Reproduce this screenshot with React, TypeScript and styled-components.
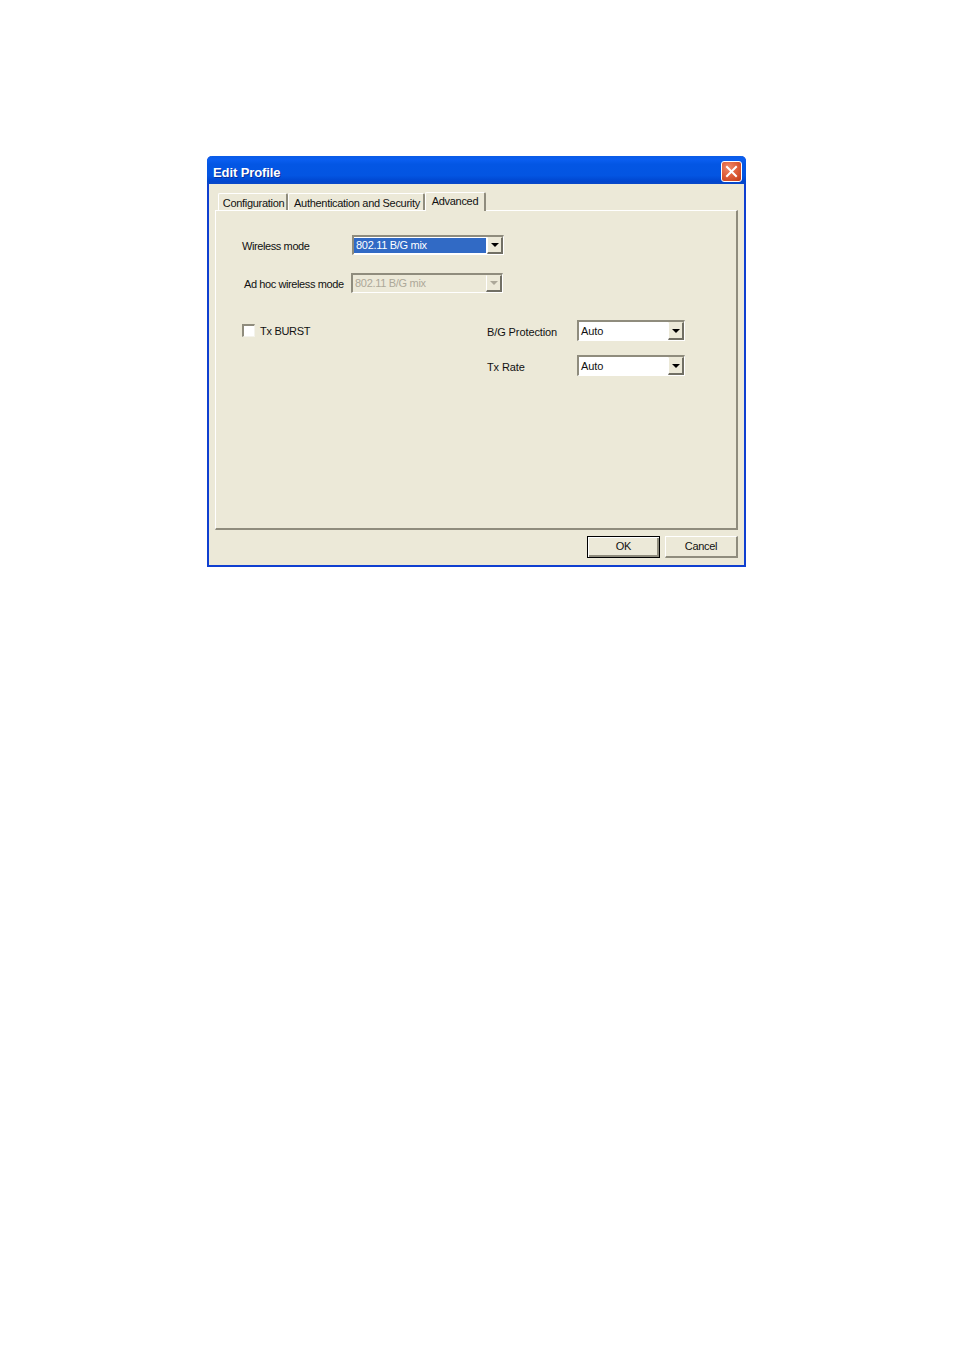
import React from "react";
import styled, { createGlobalStyle } from "styled-components";

const Global = createGlobalStyle`
  html, body { margin: 0; padding: 0; background: #fff; }
  body { font-family: "Liberation Sans", Arial, sans-serif; font-size: 11px; letter-spacing: -0.3px; color: #111; }
`;

const Dialog = styled.div`
  box-sizing: border-box;
  width: 539px;
  height: 411px;
  margin: 156px 0 0 207px;
  display: flex;
  flex-direction: column;
  background: #ece9d8;
  border: solid #0f3fd0;
  border-width: 0 2px 2px 2px;
  border-radius: 5px 5px 0 0;
`;

const TitleBar = styled.div`
  flex: none;
  height: 28px;
  margin: 0 -2px;
  padding: 0 4px 0 6px;
  display: flex;
  align-items: center;
  justify-content: space-between;
  border-radius: 5px 5px 0 0;
  background: linear-gradient(180deg, #0a5be6 0%, #0a5ef0 12%, #0356e4 30%, #0355e2 70%, #0046cf 90%, #0a48c8 100%);
`;

const Title = styled.span`
  padding-top: 4px;
  font-size: 13px;
  font-weight: bold;
  letter-spacing: -0.1px;
  color: #fff;
  text-shadow: 1px 1px 0 #0a2f9c;
`;

const CloseButton = styled.button`
  box-sizing: border-box;
  width: 21px;
  height: 21px;
  margin-top: 3px;
  padding: 0;
  display: flex;
  align-items: center;
  justify-content: center;
  border: 1px solid #fff;
  border-radius: 3px;
  background: radial-gradient(circle at 35% 30%, #ee8b6c 0%, #e0603c 45%, #c03a16 100%);
`;

const TabStrip = styled.div`
  flex: none;
  height: 26px;
  padding-left: 9px;
  display: flex;
  align-items: flex-end;
`;

const Tab = styled.div<{ $active?: boolean; $width: number }>`
  box-sizing: border-box;
  width: ${(p) => p.$width}px;
  height: ${(p) => (p.$active ? 19 : 17)}px;
  padding: ${(p) => (p.$active ? "2px 0 0 0" : "3px 0 0 2px")};
  margin-bottom: ${(p) => (p.$active ? -1 : 0)}px;
  text-align: center;
  white-space: nowrap;
  position: relative;
  z-index: ${(p) => (p.$active ? 2 : 0)};
  background: #ece9d8;
  border-top: 1px solid #fff;
  border-left: 1px solid #fff;
  border-right: 2px solid #8f8c7d;
  border-radius: 2px 2px 0 0;
`;

const Panel = styled.div`
  box-sizing: border-box;
  flex: none;
  width: 523px;
  height: 320px;
  margin-left: 6px;
  padding: 24px 0 0 26px;
  border-top: 1px solid #fff;
  border-left: 1px solid #fff;
  border-right: 2px solid #8f8c7d;
  border-bottom: 2px solid #8f8c7d;
`;

const Row = styled.div<{ $gap: number }>`
  display: flex;
  align-items: center;
  margin-bottom: ${(p) => p.$gap}px;
`;

const Label = styled.span<{ $width: number; $indent?: number; $tight?: boolean }>`
  flex: none;
  box-sizing: border-box;
  width: ${(p) => p.$width}px;
  padding: 2px 0 0 ${(p) => p.$indent ?? 0}px;
  white-space: nowrap;
  ${(p) => (p.$tight ? "letter-spacing: -0.4px;" : "")}
`;

const Combo = styled.div<{ $width: number; $height?: number; $disabled?: boolean }>`
  box-sizing: border-box;
  flex: none;
  width: ${(p) => p.$width}px;
  height: ${(p) => p.$height ?? 20}px;
  display: flex;
  align-items: stretch;
  background: ${(p) => (p.$disabled ? "#ece9d8" : "#fff")};
  border-top: 2px solid #8f8c7d;
  border-left: 2px solid #8f8c7d;
  border-right: 1px solid #fff;
  border-bottom: 1px solid #fff;
`;

const ComboValue = styled.div<{ $selected?: boolean; $disabled?: boolean; $lineHeight: number }>`
  flex: 1;
  margin: 1px 1px 1px 0;
  padding-left: 2px;
  line-height: ${(p) => p.$lineHeight}px;
  white-space: nowrap;
  background: ${(p) => (p.$selected ? "#316ac5" : "transparent")};
  color: ${(p) => (p.$selected ? "#fff" : p.$disabled ? "#aca899" : "#111")};
`;

const ComboArrow = styled.div`
  box-sizing: border-box;
  flex: none;
  width: 16px;
  display: flex;
  align-items: center;
  justify-content: center;
  background: #ece9d8;
  border-top: 1px solid #ece9d8;
  border-left: 1px solid #fff;
  border-right: 2px solid #716f64;
  border-bottom: 2px solid #716f64;
`;

const Arrow = styled.span<{ $disabled?: boolean }>`
  width: 0;
  height: 0;
  border-left: 4px solid transparent;
  border-right: 4px solid transparent;
  border-top: 4px solid ${(p) => (p.$disabled ? "#aca899" : "#000")};
`;

const Columns = styled.div`
  display: flex;
  margin-top: 27px;
`;

const LeftColumn = styled.div`
  flex: none;
  width: 245px;
  height: 21px;
  display: flex;
  align-items: center;
  gap: 5px;
`;

const CheckBox = styled.span`
  box-sizing: border-box;
  flex: none;
  width: 13px;
  height: 13px;
  background: #fff;
  border-top: 2px solid #8f8c7d;
  border-left: 2px solid #8f8c7d;
  border-right: 1px solid #f4f3ec;
  border-bottom: 1px solid #f4f3ec;
`;

const RightColumn = styled.div`
  display: flex;
  flex-direction: column;
  letter-spacing: -0.1px;
`;

const Footer = styled.div`
  flex: 1;
  display: flex;
  justify-content: flex-end;
  align-items: flex-start;
  gap: 5px;
  padding: 6px 6px 0 0;
`;

const Button = styled.div<{ $default?: boolean }>`
  box-sizing: border-box;
  width: 73px;
  height: 22px;
  padding-bottom: 2px;
  display: flex;
  align-items: center;
  justify-content: center;
  background: #ece9d8;
  ${(p) =>
    p.$default
      ? "border: 1px solid #000; box-shadow: inset 1px 1px 0 #fff, inset -2px -2px 0 #8f8c7d;"
      : "border-top: 1px solid #fff; border-left: 1px solid #fff; border-right: 2px solid #8f8c7d; border-bottom: 2px solid #8f8c7d;"}
`;

const Select = ({ value, width, height, selected, disabled }: { value: string; width: number; height?: number; selected?: boolean; disabled?: boolean }) => (
  <Combo $width={width} $height={height} $disabled={disabled}>
    <ComboValue $selected={selected} $disabled={disabled} $lineHeight={height ? 17 : 15}>{value}</ComboValue>
    <ComboArrow><Arrow $disabled={disabled} /></ComboArrow>
  </Combo>
);

export default function App() {
  return (
    <>
      <Global />
      <Dialog>
        <TitleBar>
          <Title>Edit Profile</Title>
          <CloseButton aria-label="Close">
            <svg width="13" height="13" viewBox="0 0 13 13">
              <path d="M2 2 L11 11 M11 2 L2 11" stroke="#fff" strokeWidth="2" strokeLinecap="square" fill="none" />
            </svg>
          </CloseButton>
        </TitleBar>
        <TabStrip>
          <Tab $width={70}>Configuration</Tab>
          <Tab $width={137}>Authentication and Security</Tab>
          <Tab $width={61} $active>Advanced</Tab>
        </TabStrip>
        <Panel>
          <Row $gap={18}>
            <Label $width={110} $tight>Wireless mode</Label>
            <Select value="802.11 B/G mix" width={152} selected />
          </Row>
          <Row $gap={0}>
            <Label $width={109} $indent={2} $tight>Ad hoc wireless mode</Label>
            <Select value="802.11 B/G mix" width={152} disabled />
          </Row>
          <Columns>
            <LeftColumn>
              <CheckBox />
              <span>Tx BURST</span>
            </LeftColumn>
            <RightColumn>
              <Row $gap={14}>
                <Label $width={90}>B/G Protection</Label>
                <Select value="Auto" width={108} height={21} />
              </Row>
              <Row $gap={0}>
                <Label $width={90}>Tx Rate</Label>
                <Select value="Auto" width={108} height={21} />
              </Row>
            </RightColumn>
          </Columns>
        </Panel>
        <Footer>
          <Button $default>OK</Button>
          <Button>Cancel</Button>
        </Footer>
      </Dialog>
    </>
  );
}
